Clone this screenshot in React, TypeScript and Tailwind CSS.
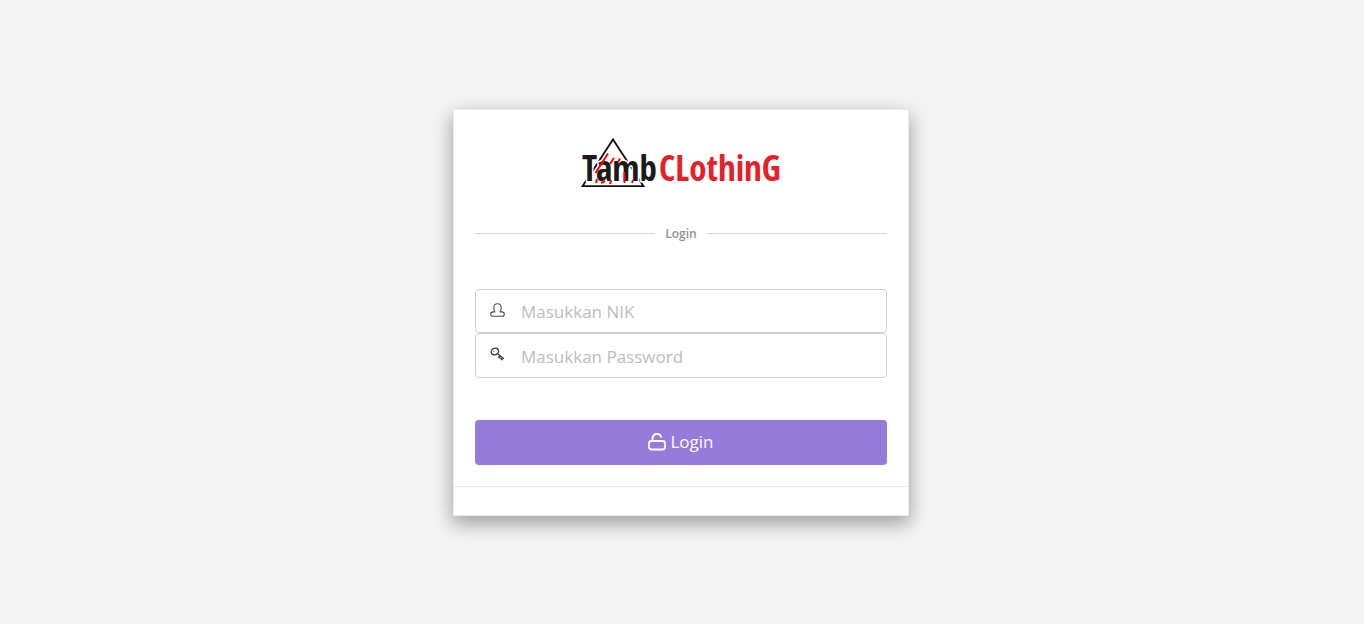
function Logo() {
  return (
    <svg role="img" aria-label="TambClothing" viewBox="0 0 200 50" className="h-[50px] w-[200px] overflow-visible">
      <path d="M1.500 48.200 32 1.500 62.500 48.200Z" fill="#fff" stroke="#111" strokeWidth="1.8" />
      <g className="font-['Noto_Sans_Condensed','Open_Sans_Condensed','Liberation_Sans_Narrow',sans-serif] text-[35px] font-bold">
        <text x="1" y="43" fill="#1b191a" stroke="#fff" strokeWidth="3" paintOrder="stroke">Tamb</text>
        <text x="78" y="43" fill="#e71f2b">CLothinG</text>
      </g>
      <path d="M27 15.500 14.500 35M33 20 29 26M39 20.500 37 24M16 41 15 45M24 43 20 45M30 42 29 46M43.500 34V45M52 42 51 45" stroke="#f00" strokeWidth="2" fill="none" />
    </svg>
  );
}

function UserIcon() {
  return (
    <svg aria-hidden="true" viewBox="0 0 15 14" className="h-[14px] w-[15px]" fill="none" stroke="#484d55" strokeWidth="1.1" strokeLinejoin="round">
      <path d="M4.900 8.900C4.100 7.900 3.800 6.300 3.800 4.700 3.800 2.300 5.300.7 7.500.7s3.700 1.600 3.700 4c0 1.600-.3 3.200-1.100 4.200h1.600c1.800 0 2.600.8 2.600 2.300 0 1.400-.6 2-1.900 2H2.600C1.300 13.200.7 12.600.7 11.200c0-1.500.8-2.300 2.600-2.300Z" />
    </svg>
  );
}

function KeyIcon() {
  return (
    <svg aria-hidden="true" viewBox="0 0 15 14" className="h-[14px] w-[15px]" fill="none" stroke="#353a42" strokeWidth="1.400" strokeLinejoin="round" strokeLinecap="round">
      <ellipse cx="4.900" cy="4.500" rx="3.800" ry="3.200" transform="rotate(-30 4.900 4.500)" />
      <path d="m7.400 6.600 6 4.900M9.800 9l-1 1.200 1.300.9M12.200 10.900l-1 1.200.9.700" strokeWidth="1.300" />
      <path d="M3.800 4.400h.2" strokeWidth="1" />
    </svg>
  );
}

function UnlockIcon() {
  return (
    <svg aria-hidden="true" viewBox="0 0 18 18" className="size-[18px]" fill="none" stroke="#fff" strokeWidth="1.900" strokeLinecap="round">
      <rect x="1" y="8" width="16" height="8.500" rx="2.500" />
      <path d="M4.500 8V5.500C4.500 2.700 6.300 1 9 1c2 0 3.500 1 4.100 2.800" />
    </svg>
  );
}

const fields = [
  { id: "nik", type: "text", label: "Masukkan NIK", Icon: UserIcon },
  { id: "password", type: "password", label: "Masukkan Password", Icon: KeyIcon },
];

export default function App() {
  return (
    <main className="flex min-h-screen items-center justify-center bg-[#f3f3f3] py-4 pr-4 pl-[14px] font-['Open_Sans','Noto_Sans',sans-serif]">
      <section className="w-full max-w-[456px] border border-[#ebebeb] bg-white shadow-[0_8px_17px_0_rgba(0,0,0,0.2),0_6px_20px_0_rgba(0,0,0,0.19)]">
        <header className="flex flex-col px-[21px] pt-7">
          <div className="flex justify-center">
            <Logo />
          </div>
          <h1 className="mt-9 flex items-center gap-[10px] text-xs leading-5 font-semibold text-[#89939b] before:h-px before:flex-1 before:bg-[#d8d8d8] after:h-px after:flex-1 after:bg-[#d8d8d8]">
            Login
          </h1>
        </header>
        <form className="px-[21px] pt-[45px] pb-[21px]" onSubmit={(e) => e.preventDefault()}>
          {fields.map(({ id, type, label, Icon }) => (
            <div key={id} className="flex h-11 items-center rounded-[4px] border border-[#d0d0d0] bg-white last-of-type:h-[45px]">
              <label htmlFor={id} aria-label={label} className="flex w-[45px] shrink-0 pb-[2px] pl-[14px]">
                <Icon />
              </label>
              <input
                id={id}
                type={type}
                placeholder={label}
                className="h-full min-w-0 flex-1 bg-transparent pt-[2px] pr-4 text-[17px] text-[#4e5154] outline-none placeholder:text-[#bcbcbc]"
              />
            </div>
          ))}
          <button type="submit" className="mt-[42px] flex h-[45px] w-full items-center justify-center gap-1 rounded-[4px] bg-[#967adc] text-[17px] text-white">
            <UnlockIcon />
            Login
          </button>
        </form>
        <footer className="h-[29px] border-t border-[#ebebeb]" />
      </section>
    </main>
  );
}
